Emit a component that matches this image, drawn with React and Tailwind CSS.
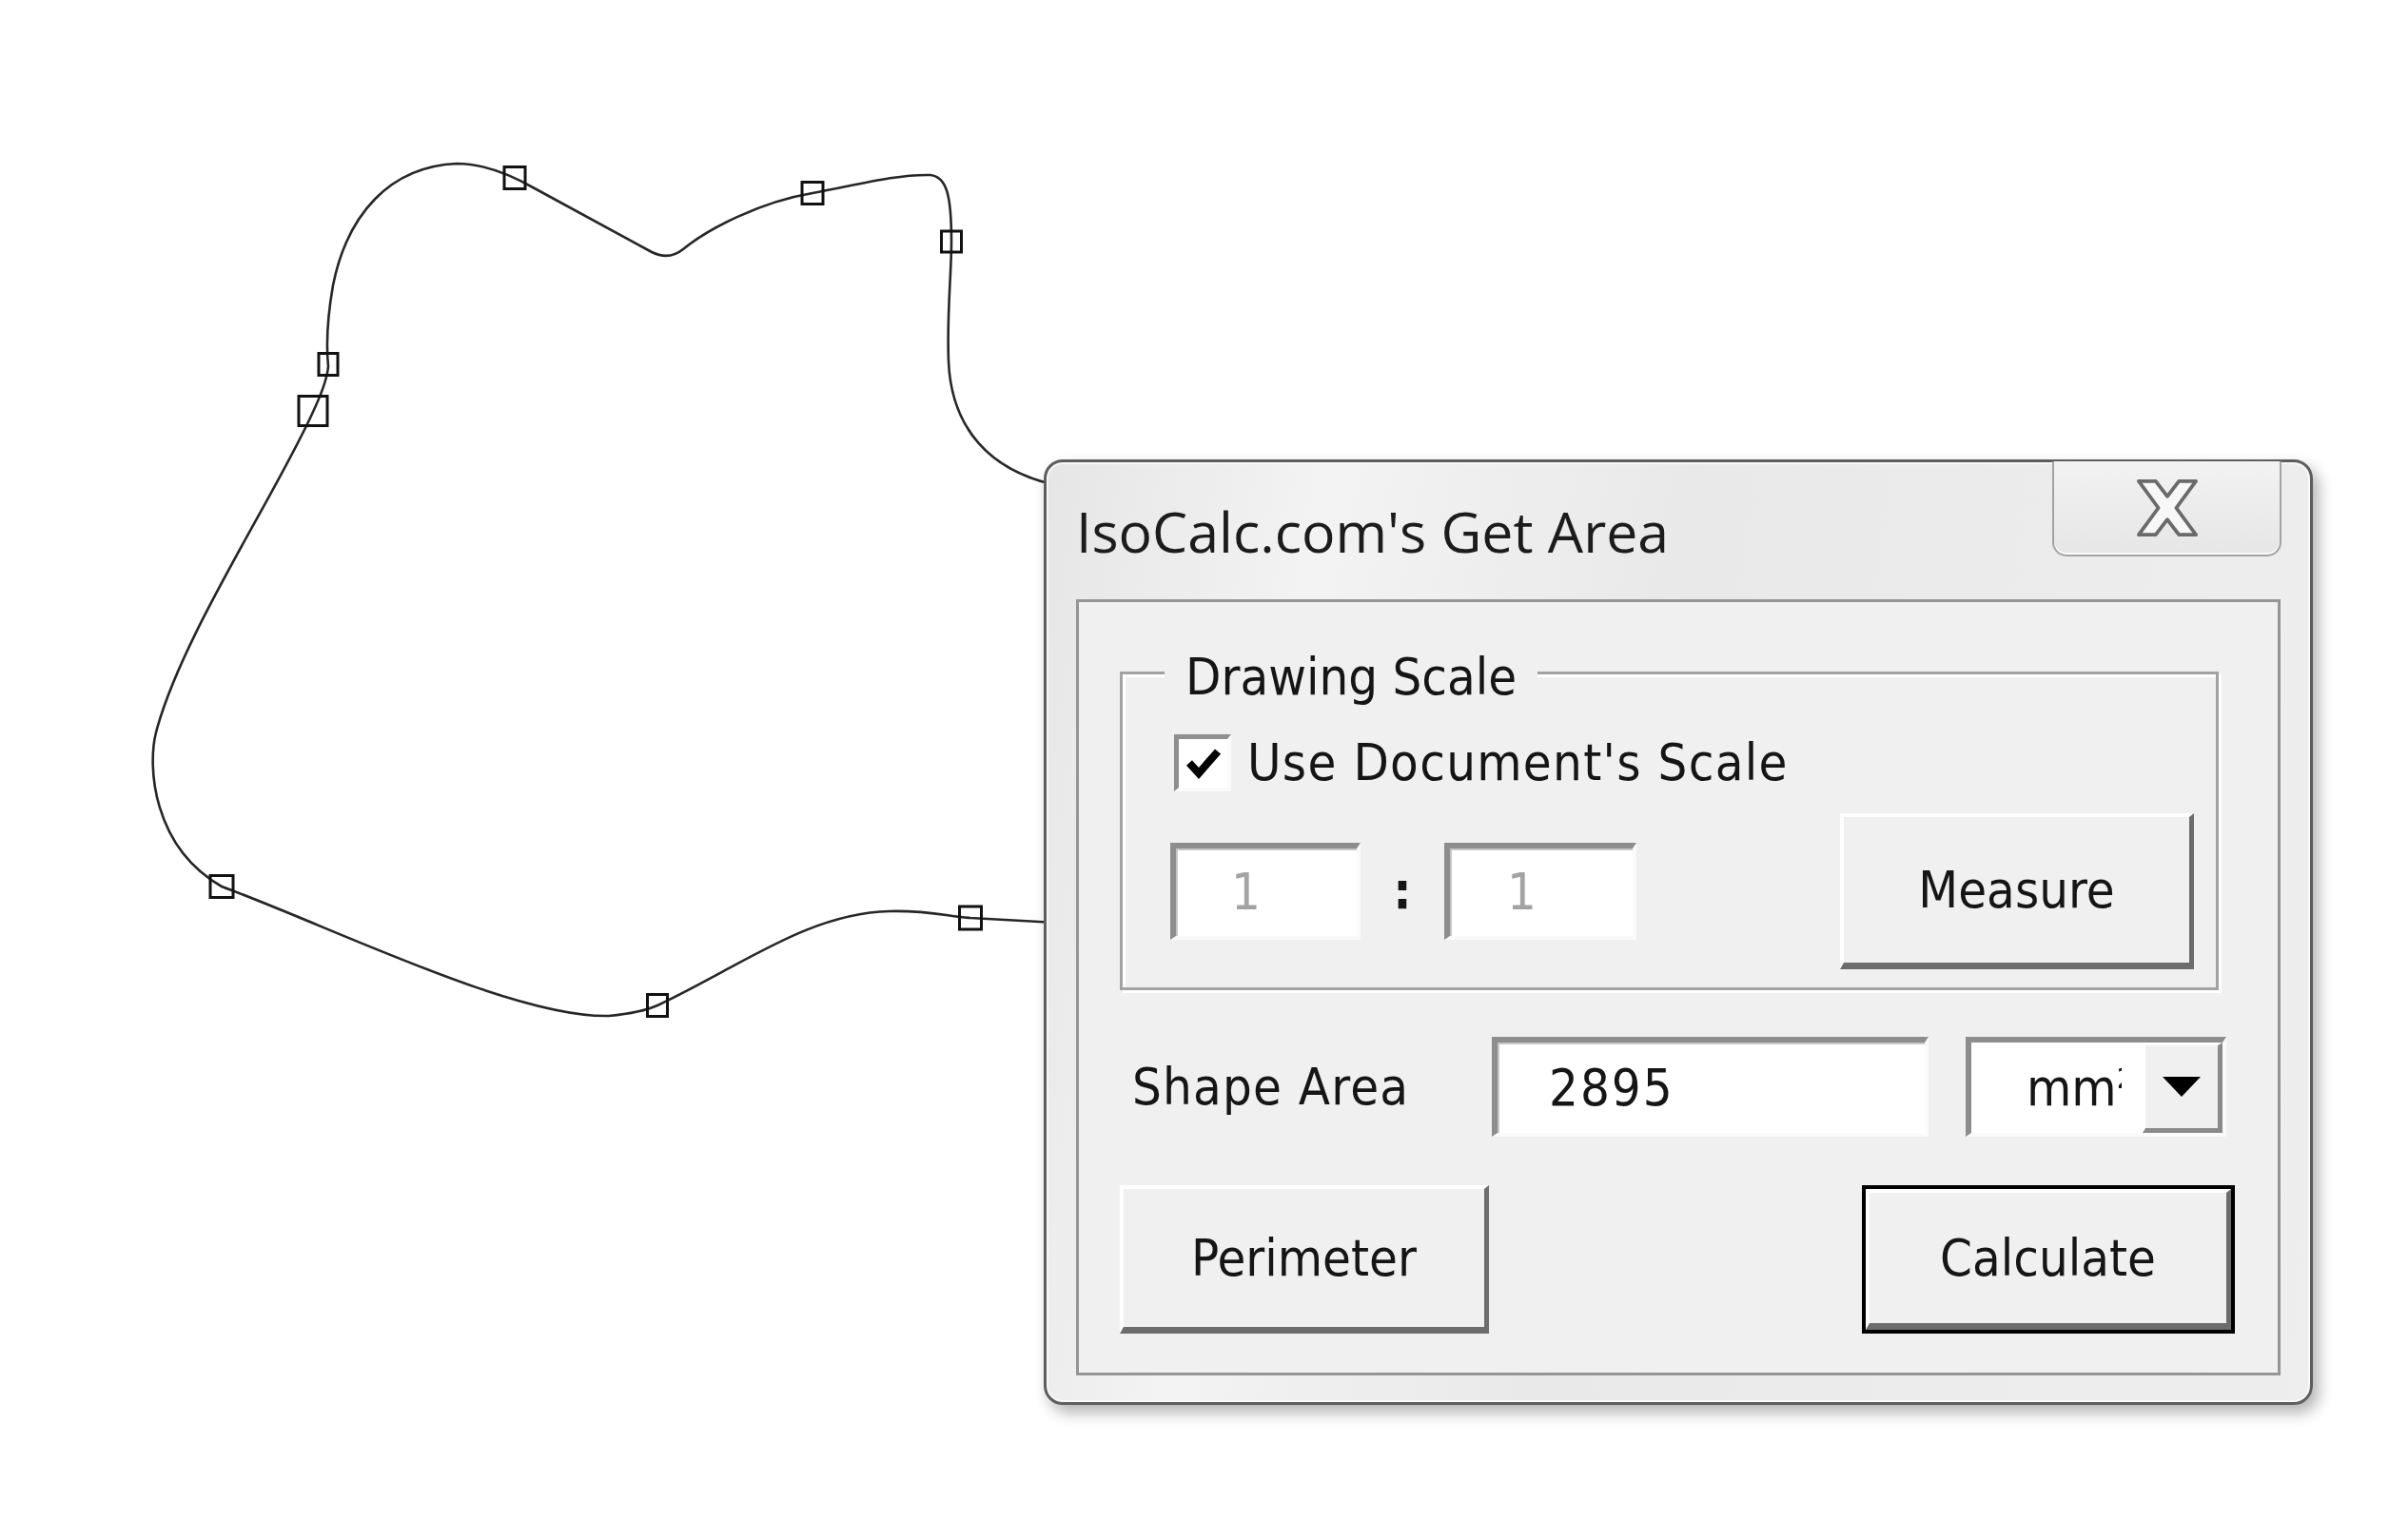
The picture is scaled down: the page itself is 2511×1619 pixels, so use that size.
const ui = "font-['DejaVu_Sans_Condensed','DejaVu_Sans',sans-serif] text-[54px] leading-none text-[#151515]";

function Sunken({ className = "", children }) {
  return (
    <div
      className={
        "flex items-center bg-white border-t-[6px] border-l-[6px] border-t-[#8d8d8d] border-l-[#8d8d8d] border-b-[4px] border-r-[4px] border-b-[#fafafa] border-r-[#fafafa] shadow-[inset_2px_2px_0_#c6c6c6] " +
        className
      }
    >
      {children}
    </div>
  );
}

function Raised({ className = "", children }) {
  return (
    <button
      type="button"
      className={
        "flex items-center justify-center bg-[#f0f0f0] border-t-[4px] border-l-[4px] border-t-white border-l-white border-b-[7px] border-r-[5px] border-b-[#6c6c6c] border-r-[#6c6c6c] " +
        ui +
        " " +
        className
      }
    >
      {children}
    </button>
  );
}

function ShapeDrawing() {
  // control nodes of the freeform shape: [cx, cy, w, h]
  const nodes = [
    [541, 187, 22, 23],
    [854, 203, 22, 23],
    [1000, 254, 21, 22],
    [345, 383, 20, 23],
    [329, 432, 30, 31],
    [233, 932, 24, 23],
    [691, 1057, 21, 23],
    [1020, 965, 23, 24],
  ];

  return (
    <svg className="absolute inset-0" width="2511" height="1619" viewBox="0 0 2511 1619">
      <path
        d="M 1110 510
           C 1040 495, 1000 450, 997 380
           C 995 330, 1000 290, 1000 254
           C 1000 205, 995 186, 978 184
           C 940 183, 895 196, 854 203
           C 800 212, 745 240, 718 262
           C 708 270, 697 271, 685 265
           L 560 197
           C 530 180, 505 172, 480 172
           C 410 175, 365 225, 350 300
           C 343 340, 343 365, 345 385
           C 344 400, 336 418, 329 433
           C 290 520, 190 670, 164 770
           C 155 805, 160 890, 233 932
           C 350 975, 540 1070, 640 1068
           C 660 1066, 680 1062, 691 1057
           C 780 1015, 850 960, 935 958
           C 975 957, 995 963, 1020 965
           L 1110 970"
        fill="none"
        stroke="#262626"
        strokeWidth="2.6"
      />
      {nodes.map(([cx, cy, w, h], i) => (
        <rect
          key={i}
          x={cx - w / 2}
          y={cy - h / 2}
          width={w}
          height={h}
          fill="none"
          stroke="#111"
          strokeWidth="3"
        />
      ))}
    </svg>
  );
}

function CloseGlyph() {
  return (
    <svg width="66" height="62" viewBox="-3 -3 70 66">
      <polygon
        points="0,0 19,0 32,17 45,0 64,0 42,30 64,60 45,60 32,43 19,60 0,60 22,30"
        fill="#f7f7f7"
        stroke="#6a6a6a"
        strokeWidth="4"
        strokeLinejoin="round"
      />
    </svg>
  );
}

function GetAreaDialog() {
  return (
    <div className="absolute left-[1097px] top-[483px] w-[1334px] h-[994px] flex flex-col rounded-[20px] border-[3px] border-[#5e5e5e] bg-[linear-gradient(100deg,#e6e6e6_0%,#f3f3f3_20%,#e9e9e9_45%,#eeeeee_100%)] shadow-[inset_0_0_0_2px_#f8f8f8,6px_8px_16px_rgba(0,0,0,0.3)]">
      {/* title bar */}
      <div className="flex items-start h-[144px] shrink-0">
        <div className="mt-[42px] pl-[31px] font-['Open_Sans','Noto_Sans',sans-serif] text-[59px] leading-[60px] text-[#1c1c1c] whitespace-nowrap">
          IsoCalc.com's Get Area
        </div>
        <button
          type="button"
          className="ml-auto mr-[30px] -mt-[1px] w-[241px] h-[100px] flex items-center justify-center rounded-b-[15px] border-x-2 border-b-2 border-[#a3a3a3] bg-[linear-gradient(#f2f2f2,#e6e6e6)] shadow-[inset_0_-2px_0_#fbfbfb]"
        >
          <CloseGlyph />
        </button>
      </div>

      {/* client area */}
      <div className="mx-[31px] h-[816px] flex flex-col border-[3px] border-[#959595] bg-[#f0f0f0]">
        {/* Drawing Scale group */}
        <div className="relative ml-[43px] mt-[73px] w-[1155px] h-[335px] flex flex-col pt-[63px] pl-[50px] pr-[23px] border-[3px] border-[#a2a2a2] shadow-[inset_3px_3px_0_#ffffff,3px_3px_0_#ffffff]">
          <span className={"absolute -top-[24px] left-[44px] px-[22px] bg-[#f0f0f0] whitespace-nowrap " + ui}>
            Drawing Scale
          </span>

          <div className="flex items-center h-[60px]">
            <div className="ml-[4px] w-[60px] h-[60px] flex items-center justify-center bg-white border-t-[5px] border-l-[5px] border-t-[#8e8e8e] border-l-[#8e8e8e] border-b-[4px] border-r-[4px] border-b-[#fafafa] border-r-[#fafafa]">
              <svg width="36" height="33" viewBox="0 0 36 33">
                <path d="M3 16 L13 27 L33 4" fill="none" stroke="#000" strokeWidth="8" />
              </svg>
            </div>
            <span className={"ml-[17px] whitespace-nowrap tracking-[1.3px] " + ui}>Use Document's Scale</span>
          </div>

          <div className="flex items-center h-[164px] mt-[23px]">
            <Sunken className="w-[200px] h-[102px] pl-[58px]">
              <span className={ui + " text-[#a3a3a3]"}>1</span>
            </Sunken>
            <span className={"w-[88px] text-center font-bold " + ui}>:</span>
            <Sunken className="w-[202px] h-[102px] pl-[60px]">
              <span className={ui + " text-[#a3a3a3]"}>1</span>
            </Sunken>
            <Raised className="ml-auto w-[372px] h-[164px]">Measure</Raised>
          </div>
        </div>

        {/* Shape area row */}
        <div className="flex items-center h-[105px] mt-[49px]">
          <span className={"w-[434px] pl-[56px] whitespace-nowrap tracking-[1.2px] " + ui}>Shape Area</span>
          <Sunken className="w-[459px] h-[105px] pl-[54px]">
            <span className={"tracking-[2px] " + ui}>2895</span>
          </Sunken>
          <div className="ml-[39px] w-[274px] h-[105px] flex bg-white border-t-[6px] border-l-[6px] border-t-[#8d8d8d] border-l-[#8d8d8d] border-b-[4px] border-r-[4px] border-b-[#fafafa] border-r-[#fafafa]">
            {/* the unit text is clipped by the narrow combo box, as in the original */}
            <div className="flex-1 min-w-0 flex items-center pl-[58px] pr-[22px]">
              <div className={"w-full overflow-hidden whitespace-nowrap " + ui}>mm²</div>
            </div>
            <div className="shrink-0 w-[84px] h-full flex items-center justify-center bg-[#f0f0f0] border-t-[3px] border-l-[3px] border-t-white border-l-white border-b-[5px] border-r-[5px] border-b-[#8a8a8a] border-r-[#8a8a8a]">
              <svg width="40" height="21" viewBox="0 0 40 21">
                <polygon points="0,0 40,0 20,21" fill="#000" />
              </svg>
            </div>
          </div>
        </div>

        {/* buttons */}
        <div className="flex items-center h-[156px] mt-[51px]">
          <Raised className="ml-[43px] w-[388px] h-[156px]">Perimeter</Raised>
          <div className="ml-auto mr-[45px] w-[392px] h-[156px] border-[4px] border-black">
            <Raised className="w-full h-full">Calculate</Raised>
          </div>
        </div>
      </div>
    </div>
  );
}

export default function App() {
  return (
    <div className="relative w-[2511px] h-[1619px] bg-white overflow-hidden">
      <ShapeDrawing />
      <GetAreaDialog />
    </div>
  );
}
